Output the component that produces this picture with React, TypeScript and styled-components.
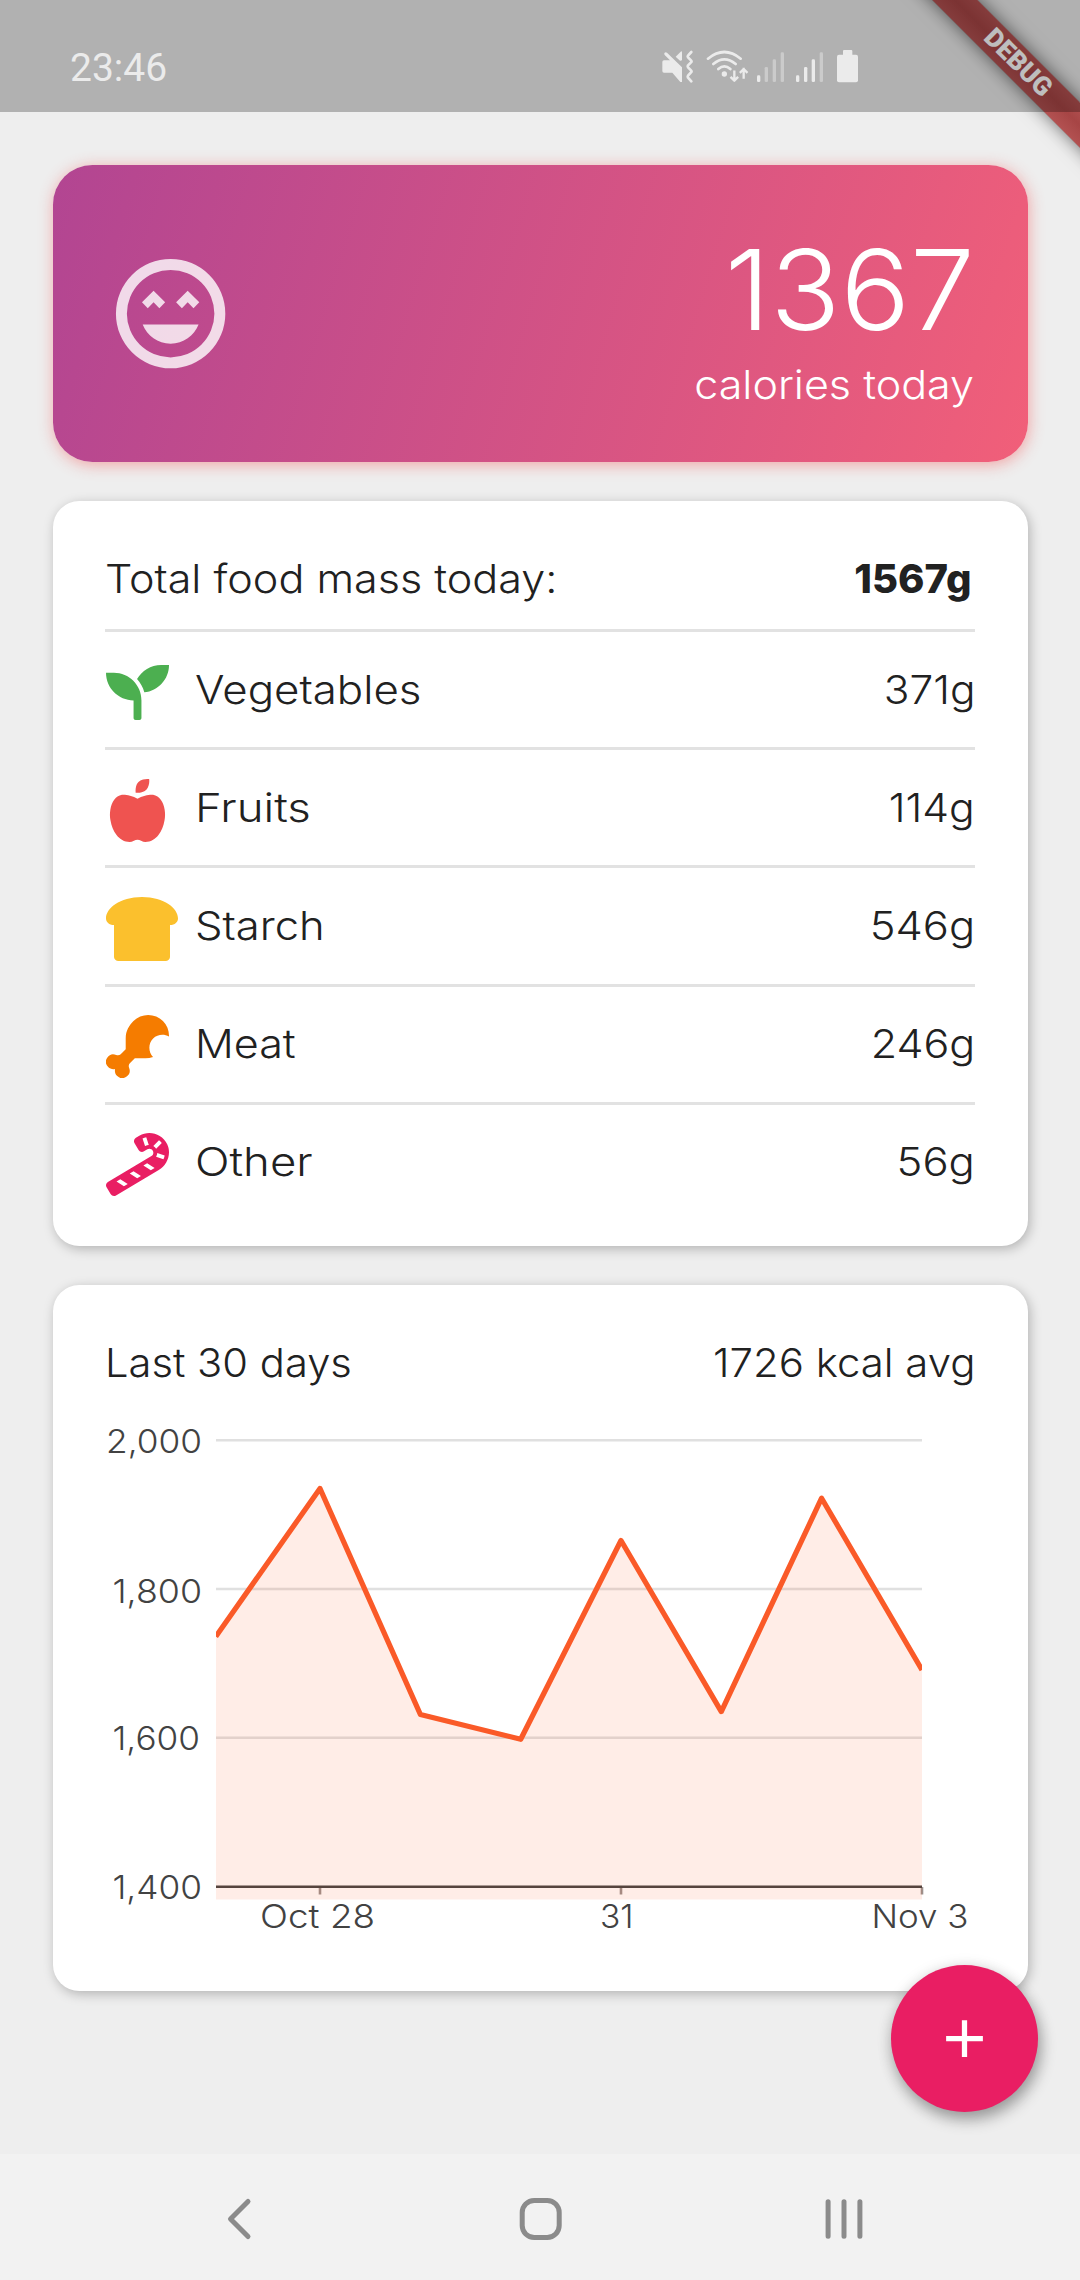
import React from 'react';
import styled, { createGlobalStyle } from 'styled-components';
import { FaAppleAlt, FaBreadSlice, FaCandyCane, FaDrumstickBite, FaSeedling } from 'react-icons/fa';
import type { IconType } from 'react-icons';

const GlobalStyle = createGlobalStyle`
  *, *::before, *::after { box-sizing: border-box; }
  body { margin: 0; background: #eee; }
`;

const fontStack = `Inter, "Liberation Sans", sans-serif`;

const Screen = styled.div`
  position: relative;
  display: flex;
  flex-direction: column;
  width: 1080px;
  height: 2280px;
  overflow: hidden;
  background: #eee;
  color: #212121;
  font-family: ${fontStack};
  font-size: 40px;
  font-weight: 300;
  line-height: 50px;
`;

/* Text drawn in a wide cut: stretched from whichever edge it is aligned to. */
const Text = styled.span<{ $wide?: number; $end?: boolean }>`
  display: block;
  white-space: nowrap;
  transform: scaleX(${(p) => p.$wide ?? 1});
  transform-origin: ${(p) => (p.$end ? 'right' : 'left')} center;
`;

const StatusBar = styled.header`
  position: relative;
  z-index: 2;
  display: flex;
  justify-content: space-between;
  align-items: flex-start;
  height: 112px;
  padding: 48px 220px 0 70px;
  background: rgba(0, 0, 0, 0.255);
`;

const Clock = styled.time`
  color: #ebebeb;
  font-family: Roboto, sans-serif;
  font-size: 39px;
  font-weight: 400;
  line-height: 41px;
`;

const Banner = styled.div`
  position: absolute;
  z-index: 1;
  top: 46.7px;
  left: 867.8px;
  width: 300px;
  height: 31.5px;
  transform: rotate(45deg);
  background:
    linear-gradient(rgba(183, 28, 28, 0.627), rgba(183, 28, 28, 0.627)),
    linear-gradient(rgba(0, 0, 0, 0.28), rgba(0, 0, 0, 0.42), rgba(0, 0, 0, 0.28));
  box-shadow: 0 0 18px rgba(0, 0, 0, 0.55);
  color: #fff;
  font-family: Roboto, sans-serif;
  font-size: 26.2px;
  font-weight: 900;
  line-height: 31.5px;
  text-align: center;
`;

const Content = styled.main`
  flex: 1;
  display: flex;
  flex-direction: column;
  gap: 39px;
  padding: 53px 52.5px 0;
`;

const Hero = styled.section`
  display: flex;
  justify-content: space-between;
  align-items: center;
  height: 297px;
  padding: 0 52.5px;
  border-radius: 39.4px;
  background: linear-gradient(107deg, #b24592, #f15f79);
  box-shadow: 1px 2.6px 15px rgba(245, 80, 80, 0.45);
  color: #fff;
`;

const HeroFigures = styled.div`
  display: flex;
  flex-direction: column;
  align-items: flex-end;
  gap: 20px;
  margin-top: 22px;
`;

const HeroNumber = styled(Text)`
  font-size: 111px;
  line-height: 100px;
`;

const HeroCaption = styled(Text)`
  margin-right: 1px;
`;

const Card = styled.section<{ $height: number }>`
  display: flex;
  flex-direction: column;
  height: ${(p) => p.$height}px;
  padding: 52.5px 52.5px 0;
  border-radius: 26.25px;
  background: #fff;
  box-shadow: 2px 3px 12px rgba(0, 0, 0, 0.25);
`;

const CardHeader = styled.div<{ $height: number }>`
  display: flex;
  justify-content: space-between;
  align-items: flex-start;
  height: ${(p) => p.$height}px;
`;

const Strong = styled.strong`
  padding-right: 3.5px;
  font-weight: 800;
`;

const Row = styled.div`
  display: flex;
  align-items: center;
  height: 118.1px;
  border-top: 3px solid #e2e2e2;
`;

const IconSlot = styled.span<{ $color: string; $size: number }>`
  display: flex;
  justify-content: center;
  width: ${(p) => p.$size}px;
  margin: 5px ${(p) => 89.5 - p.$size}px 0 0.7px;
  color: ${(p) => p.$color};

  svg {
    flex: none;
    height: ${(p) => p.$size}px;
    width: auto;
  }
`;

const RowLabel = styled(Text)`
  margin-right: auto;
`;

const Fab = styled.button`
  position: absolute;
  z-index: 3;
  top: 1965px;
  left: 891px;
  display: grid;
  place-items: center;
  width: 147px;
  height: 147px;
  padding: 0;
  border: 0;
  border-radius: 50%;
  background: #e91e63;
  box-shadow: 3px 8px 15px rgba(0, 0, 0, 0.3), 0 2px 16px rgba(0, 0, 0, 0.12);
`;

const NavBar = styled.nav`
  display: flex;
  align-items: center;
  gap: 242.7px;
  height: 126px;
  padding: 4px 0 0 208.5px;
  background: #f2f2f2;
`;

const Drawing = styled.svg`
  display: block;
  flex: none;
`;

const AxisLabel = styled.text`
  fill: #424242;
  font-size: 32.5px;
`;

type Food = {
  label: string;
  grams: string;
  Icon: IconType;
  color: string;
  size: number;
  labelWide: number;
  gramsWide: number;
};

const foods: Food[] = [
  { label: 'Vegetables', grams: '371g', Icon: FaSeedling, color: '#4caf50', size: 63, labelWide: 1.095, gramsWide: 1.06 },
  { label: 'Fruits', grams: '114g', Icon: FaAppleAlt, color: '#ef5350', size: 63, labelWide: 1.14, gramsWide: 1.065 },
  { label: 'Starch', grams: '546g', Icon: FaBreadSlice, color: '#fbc02d', size: 72, labelWide: 1.09, gramsWide: 1.085 },
  { label: 'Meat', grams: '246g', Icon: FaDrumstickBite, color: '#f57c00', size: 63, labelWide: 1.077, gramsWide: 1.075 },
  { label: 'Other', grams: '56g', Icon: FaCandyCane, color: '#e91e63', size: 63, labelWide: 1.138, gramsWide: 1.09 },
];

function StatusIcons() {
  const dim = '#cbcbcb';
  return (
    <Drawing width="200" height="36" viewBox="120 145 600 108" fill="#ebebeb">
      <path d="M132 182H150L134 166Q131 162 134 159Q137 156 141 159L186 203V247H181L157 219H132Q127 219 127 214V187Q127 182 132 182Z" />
      <path d="M167 171L182 156Q186 153 186 158V181Q184 184 180 183Z" />
      <g fill="none" stroke="#ebebeb" strokeLinecap="round" strokeLinejoin="round">
        <path strokeWidth="8" d="M214 157L204 168Q202 170 204 173L213 182Q216 185 213 188L204 197Q202 200 204 203L213 212Q216 215 213 218L204 228Q202 231 204 234L214 245" />
        <path strokeWidth="8" d="M264 177Q313 137 362 177M280 193Q313 165 347 193M295 208Q313 192 331 208" />
        <path strokeWidth="7" strokeLinecap="square" d="M343 216V242M334 234L343 243L352 234M371 234V208M362 217L371 208L380 217" />
      </g>
      <circle cx="313" cy="223" r="8" />
      <rect x="411" y="227" width="10" height="20" rx="4" />
      <rect x="434" y="202" width="10" height="45" rx="4" fill={dim} />
      <rect x="458" y="179" width="10" height="68" rx="4" fill={dim} />
      <rect x="482" y="158" width="10" height="89" rx="4" fill={dim} />
      <rect x="528" y="227" width="10" height="20" rx="4" />
      <rect x="552" y="202" width="10" height="45" rx="4" />
      <rect x="575" y="179" width="10" height="68" rx="4" />
      <rect x="599" y="158" width="10" height="89" rx="4" fill={dim} />
      <rect x="651" y="165" width="63" height="83" rx="6" />
      <rect x="669" y="151" width="28" height="20" rx="3" />
    </Drawing>
  );
}

const points: [number, number][] = [
  [110.8, 248.5], [215, 100.5], [315.4, 326.5], [415.7, 351.3], [516, 152.5], [616.3, 323.6], [716.6, 110.2], [817, 282],
];

const yAxis = [
  { label: '2,000', x: 1, y: 64.5, length: 96 },
  { label: '1,800', x: 7.5, y: 214.5, length: 89.5 },
  { label: '1,600', x: 7.5, y: 362, length: 87.5 },
  { label: '1,400', x: 7.5, y: 511, length: 89.5 },
];

const xAxis = [
  { label: 'Oct 28', x: 155, tick: 215, length: 115 },
  { label: '31', x: 495, tick: 516, length: 33.5 },
  { label: 'Nov 3', x: 766.5, tick: 817, length: 97 },
];

function CalorieChart() {
  const line = points.map(([x, y]) => `${x},${y}`).join(' ');
  return (
    <Drawing width="870" height="550" viewBox="0 0 870 550">
      <clipPath id="plot">
        <rect x="111" y="40" width="706" height="475" />
      </clipPath>
      {[52.3, 201, 349.8].map((y) => (
        <line key={y} x1="111" x2="817" y1={y} y2={y} stroke="#e0e0e0" strokeWidth="2.6" />
      ))}
      {xAxis.map((t) => (
        <line key={t.tick} x1={t.tick} x2={t.tick} y1="499" y2="506.5" stroke="#9b908d" strokeWidth="2.6" />
      ))}
      <line x1="111" x2="817" y1="498.7" y2="498.7" stroke="#424242" strokeWidth="2.6" />
      <g clipPath="url(#plot)">
        <polygon points={`${line} 817,511.5 110.8,511.5`} fill="#ff5722" fillOpacity="0.11" />
        <polyline points={line} fill="none" stroke="#fa5a28" strokeWidth="5.25" strokeLinejoin="round" />
      </g>
      {yAxis.map((t) => (
        <AxisLabel key={t.label} x={t.x} y={t.y} textLength={t.length} lengthAdjust="spacingAndGlyphs">{t.label}</AxisLabel>
      ))}
      {xAxis.map((t) => (
        <AxisLabel key={t.label} x={t.x} y="540" textLength={t.length} lengthAdjust="spacingAndGlyphs">{t.label}</AxisLabel>
      ))}
    </Drawing>
  );
}

export default function App() {
  return (
    <Screen>
      <GlobalStyle />
      <StatusBar>
        <Clock>23:46</Clock>
        <StatusIcons />
      </StatusBar>
      <Banner>DEBUG</Banner>

      <Content>
        <Hero>
          <Drawing width="131.25" height="131.25" viewBox="0 0 24 24" fill="#fff" fillOpacity="0.8">
            <path d="M12 2A10 10 0 1 0 12 22A10 10 0 1 0 12 2ZM12 4A8 8 0 1 1 12 20A8 8 0 1 1 12 4Z" fillRule="evenodd" />
            <path d="M12 17.5C14.33 17.5 16.3 16.04 17.11 14H6.89C7.69 16.04 9.67 17.5 12 17.5ZM13 9.94L14.06 11L15.12 9.94L16.18 11L17.24 9.94L15.12 7.82ZM8.88 9.94L9.94 11L11 9.94L8.88 7.82L6.76 9.94L7.82 11Z" />
          </Drawing>
          <HeroFigures>
            <HeroNumber $end $wide={1.043}>1367</HeroNumber>
            <HeroCaption $end $wide={1.076}>calories today</HeroCaption>
          </HeroFigures>
        </Hero>

        <Card $height={745.2}>
          <CardHeader $height={75.8}>
            <Text $wide={1.077}>Total food mass today:</Text>
            <Strong>1567g</Strong>
          </CardHeader>
          {foods.map(({ label, grams, Icon, color, size, labelWide, gramsWide }) => (
            <Row key={label}>
              <IconSlot $color={color} $size={size}><Icon /></IconSlot>
              <RowLabel $wide={labelWide}>{label}</RowLabel>
              <Text $end $wide={gramsWide}>{grams}</Text>
            </Row>
          ))}
        </Card>

        <Card $height={705.7}>
          <CardHeader $height={50}>
            <Text $wide={1.042}>Last 30 days</Text>
            <Text $end $wide={1.048}>1726 kcal avg</Text>
          </CardHeader>
          <CalorieChart />
        </Card>
      </Content>

      <Fab aria-label="Add">
        <Drawing width="63" height="63" viewBox="0 0 24 24" fill="#fff">
          <path d="M19 13h-6v6h-2v-6H5v-2h6V5h2v6h6z" />
        </Drawing>
      </Fab>

      <NavBar>
        <Drawing width="60" height="60" viewBox="0 0 60 60" fill="none" stroke="#8b8b8b" strokeWidth="5" strokeLinecap="round" strokeLinejoin="round">
          <path d="M39 12.5L21.5 30L39 47.5" />
        </Drawing>
        <Drawing width="60" height="60" viewBox="0 0 60 60" fill="none" stroke="#8b8b8b" strokeWidth="5">
          <rect x="11.2" y="11.5" width="37" height="37" rx="12" />
        </Drawing>
        <Drawing width="60" height="60" viewBox="0 0 60 60" fill="none" stroke="#8b8b8b" strokeWidth="5" strokeLinecap="round">
          <path d="M14.1 12.7V47.3M30 12.7V47.3M45.9 12.7V47.3" />
        </Drawing>
      </NavBar>
    </Screen>
  );
}
